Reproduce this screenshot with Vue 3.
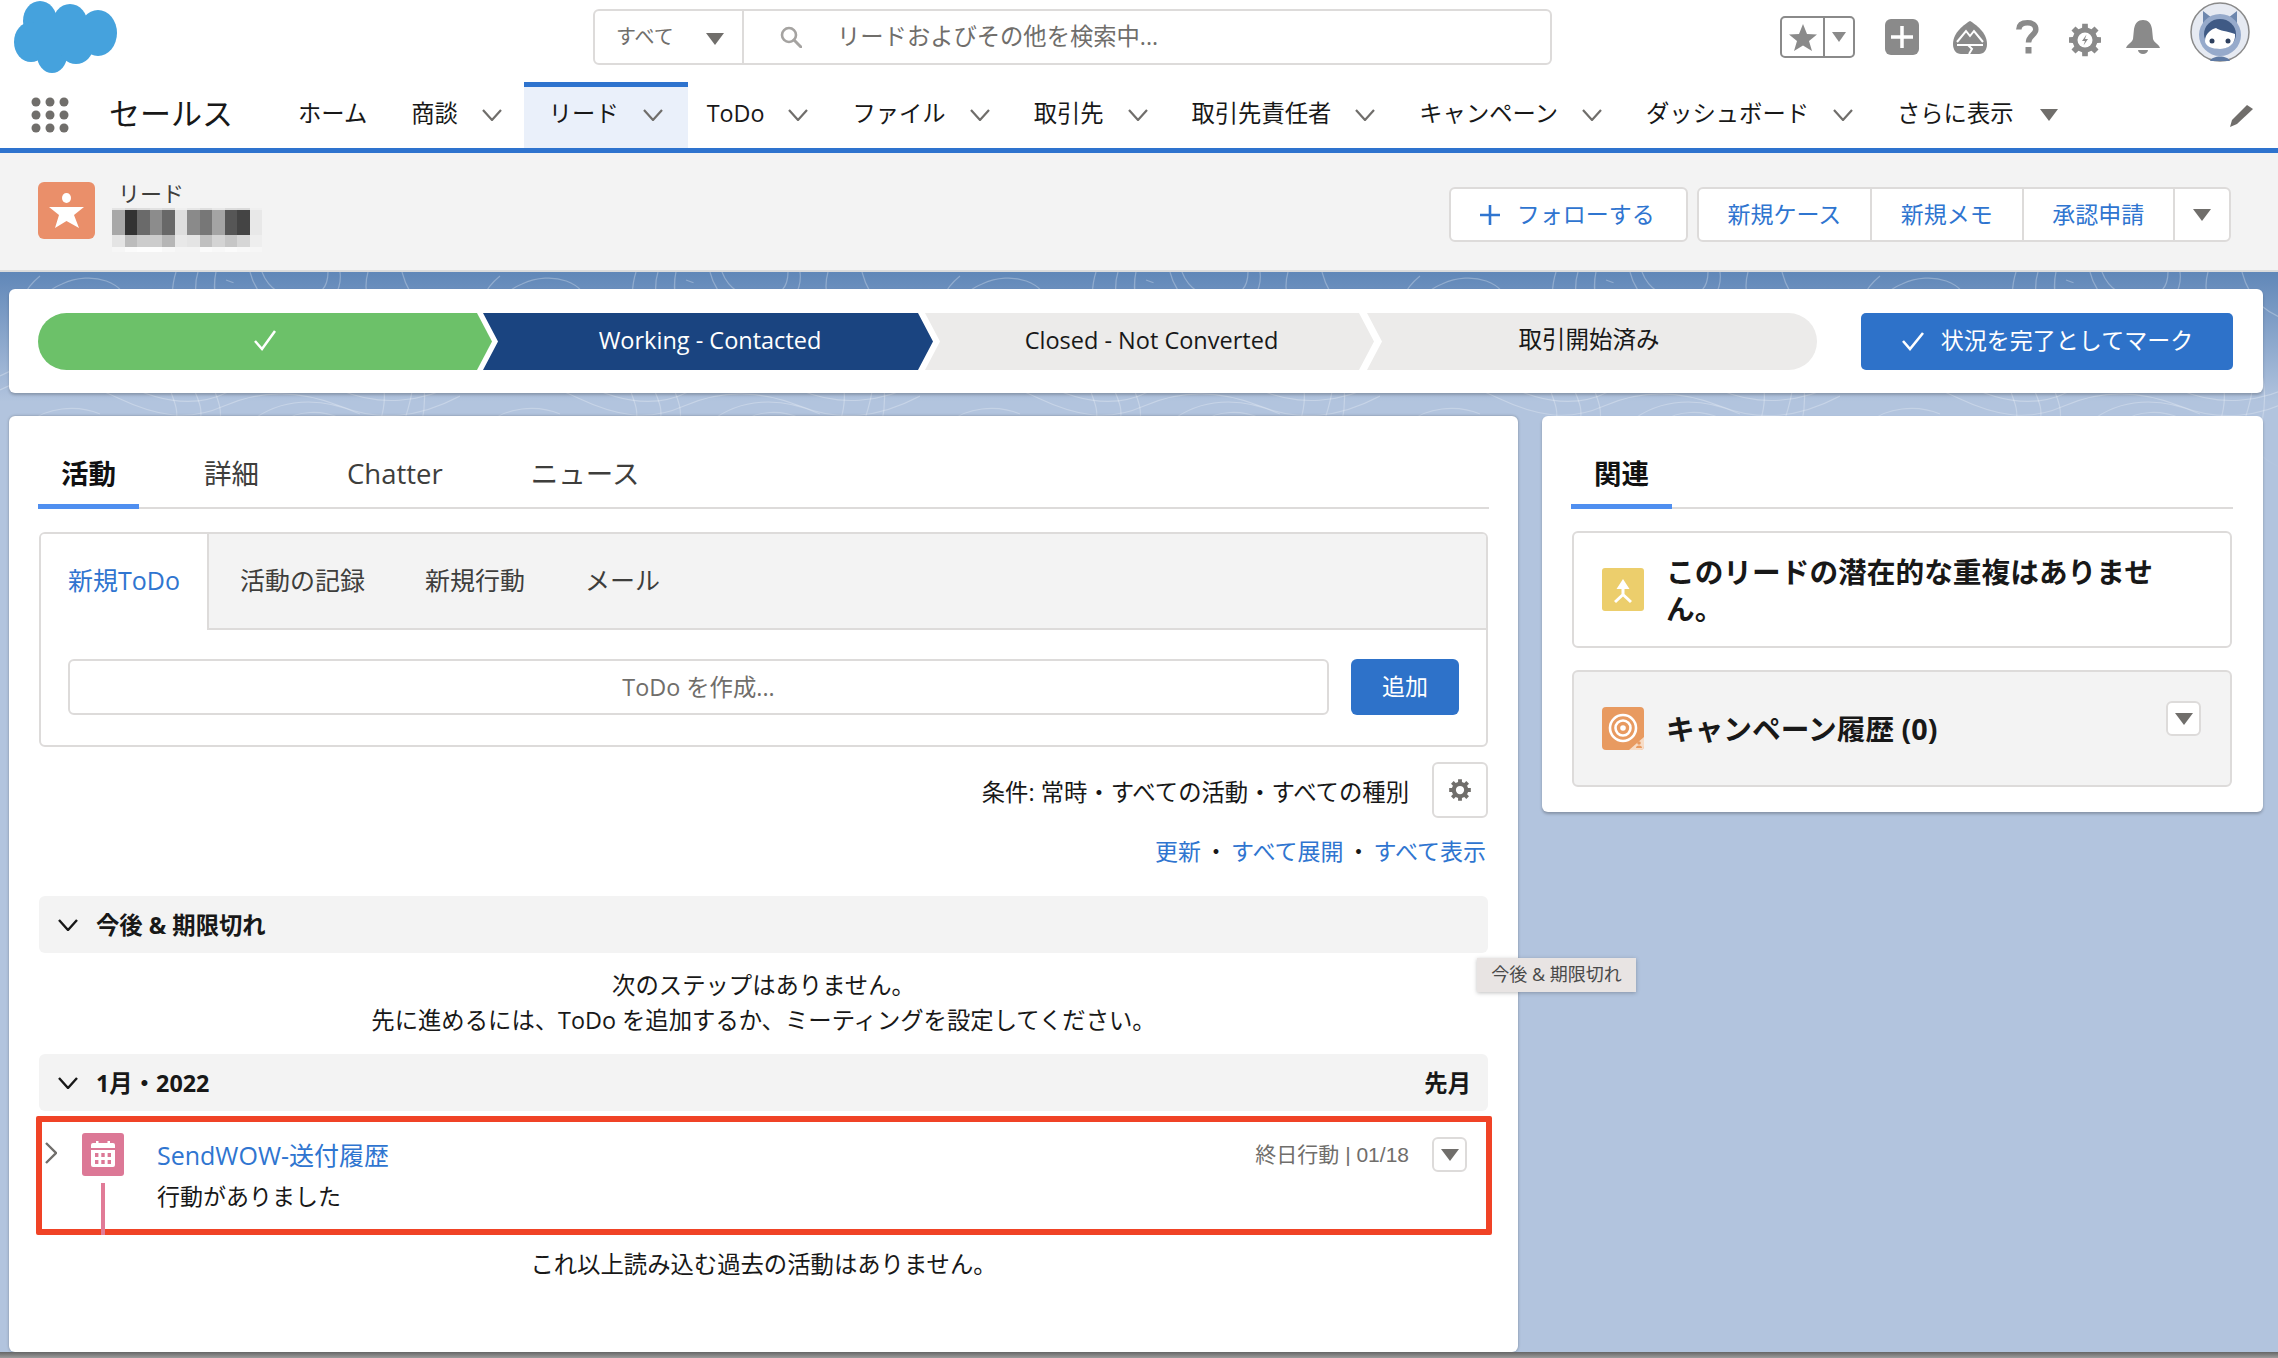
<script setup>
const navItems = [
  { label: 'ホーム' },
  { label: '商談', menu: true },
  { label: 'リード', menu: true, active: true },
  { label: 'ToDo', menu: true },
  { label: 'ファイル', menu: true },
  { label: '取引先', menu: true },
  { label: '取引先責任者', menu: true },
  { label: 'キャンペーン', menu: true },
  { label: 'ダッシュボード', menu: true },
]

const mosaicRows = [
  ['#e4e4e4', '#d8d8d8', '#dcdcdc', '#e2e2e2', '#dadada', '#efefef', '#e6e6e6', '#dedede', '#e8e8e8', '#dcdcdc', '#dadada', '#f0f0f0'],
  ['#a8a8a8', '#333333', '#6a6a6a', '#8c8c8c', '#686868', '#dedede', '#8a8a8a', '#777777', '#a4a4a4', '#565656', '#444444', '#e8e8e8'],
  ['#e4e4e4', '#bcbcbc', '#cccccc', '#cccccc', '#b6b6b6', '#e8e8e8', '#e4e4e4', '#c0c0c0', '#d4d4d4', '#c6c6c6', '#d6d6d6', '#eeeeee'],
  ['#f6f6f6', '#fbfbfb', '#fdfdfd', '#fdfdfd', '#f8f8f8', '#f4f4f4', '#f4f4f4', '#fbfbfb', '#f8f8f8', '#fbfbfb', '#f8f8f8', '#f6f6f6'],
]

const dots = []
for (let y = 0; y < 3; y++) {
  for (let x = 0; x < 3; x++) dots.push({ cx: 5 + x * 14, cy: 5 + y * 13 })
}

function gear(cx, cy, ro, ri, teeth = 8) {
  const pts = []
  const step = (Math.PI * 2) / teeth
  for (let i = 0; i < teeth; i++) {
    const a = i * step - Math.PI / 2
    const w = step * 0.22
    const w2 = step * 0.3
    pts.push([a - w2, ri], [a - w, ro], [a + w, ro], [a + w2, ri])
  }
  return pts
    .map(([a, r]) => `${(cx + Math.cos(a) * r).toFixed(1)},${(cy + Math.sin(a) * r).toFixed(1)}`)
    .join(' ')
}

const gearLarge = gear(16, 17, 16.5, 12.5)
const gearSmall = gear(12, 12, 12, 9)
</script>

<template>
  <div class="page">
    <header class="global">
      <div class="top-row">
        <svg class="logo" viewBox="14 0 104 74" width="104" height="74" aria-label="Salesforce">
          <g fill="#45a2dd">
            <ellipse cx="40" cy="21" rx="17" ry="20" />
            <ellipse cx="70" cy="25" rx="18" ry="21" />
            <ellipse cx="98" cy="33" rx="19" ry="23" />
            <ellipse cx="31" cy="42" rx="17" ry="20" />
            <ellipse cx="52" cy="55" rx="15" ry="18" />
            <ellipse cx="76" cy="47" rx="17" ry="17" />
            <rect x="34" y="20" width="60" height="30" />
          </g>
        </svg>

        <div class="search">
          <div class="search-scope">
            <span>すべて</span>
            <i class="tri"></i>
          </div>
          <div class="search-input">
            <svg viewBox="0 0 22 22" width="22" height="22">
              <circle cx="9" cy="9" r="7" fill="none" stroke="#a5a3a1" stroke-width="2.6" />
              <path d="M14 14l7 7" stroke="#a5a3a1" stroke-width="3" stroke-linecap="round" />
            </svg>
            <span>リードおよびその他を検索中...</span>
          </div>
        </div>

        <div class="tools">
          <div class="fav">
            <span class="fav-star">
              <svg viewBox="0 0 28 27" width="28" height="27">
                <polygon points="14,0 18,10 28,10.500 20,17 23,27 14,21.500 5,27 8,17 0,10.500 10,10" fill="#8a8a8a" />
              </svg>
            </span>
            <span class="fav-menu"><i class="tri tri-small"></i></span>
          </div>
          <svg class="tool-plus" viewBox="0 0 34 36" width="34" height="36">
            <rect width="34" height="36" rx="6" fill="#8a8a8a" />
            <path d="M17 7v22M6 18h22" stroke="#fff" stroke-width="3.500" />
          </svg>
          <svg class="tool-trail" viewBox="0 0 34 33" width="34" height="33">
            <path d="M17 0C22 3 34 11 34 23 34 29 31 33 26 33H8C3 33 0 29 0 23 0 11 12 3 17 0Z" fill="#8a8a8a" />
            <path d="M4 21l9-11 4 5 4-5 9 11M4 24h26" fill="none" stroke="#fff" stroke-width="2" />
            <path d="M15 24l4 4-3 5" fill="none" stroke="#fff" stroke-width="2" />
          </svg>
          <svg class="tool-help" viewBox="0 0 23 34" width="23" height="34">
            <path d="M2.800 9.500C3 4.500 7 2.800 11.500 2.800 16.500 2.800 19.800 5 19.800 9.500 19.800 15 12.500 15.500 12.500 22.500" fill="none" stroke="#8a8a8a" stroke-width="5.500" />
            <rect x="9.500" y="27" width="6" height="6.500" fill="#8a8a8a" />
          </svg>
          <svg class="tool-gear" viewBox="0 0 32 34" width="32" height="34">
            <polygon :points="gearLarge" fill="#8a8a8a" />
            <circle cx="16" cy="17" r="7.500" fill="#fff" />
            <path d="M17.500 11.500l-4.500 6.500h3l-1.500 4.500 4.500-6.500h-3z" fill="#8a8a8a" />
          </svg>
          <svg class="tool-bell" viewBox="0 0 34 34" width="34" height="34">
            <path d="M17 0C22 0 25 3 26 9L27 19C28 23 33 24 34 28H0C1 24 6 23 7 19L8 9C9 3 12 0 17 0Z" fill="#8a8a8a" />
            <path d="M12 30h10a5 4 0 0 1-10 0Z" fill="#8a8a8a" />
          </svg>
          <svg class="tool-avatar" viewBox="0 0 60 60" width="60" height="60">
            <circle cx="30" cy="30" r="29" fill="#e6eaf2" stroke="#8a8a8a" stroke-width="1.500" />
            <path d="M13 9l9 7-9 8zM47 9l-9 7 9 8z" fill="#6d87ae" />
            <ellipse cx="30" cy="33" rx="21" ry="21" fill="#96aacb" />
            <ellipse cx="30" cy="32" rx="16" ry="15" fill="#3f5a85" />
            <path d="M15 39c0-8 7-12 11-13 4 3 11 3 19 6 1 10-7 15-15 15-8 0-15-3-15-8Z" fill="#fff" />
            <circle cx="22" cy="39" r="2.500" fill="#2d3f5e" />
            <circle cx="38" cy="39" r="2.500" fill="#2d3f5e" />
            <path d="M20 59c2-6 18-6 20 0z" fill="#5f7aa3" />
          </svg>
        </div>
      </div>

      <nav class="nav-row">
        <svg class="app-grid" viewBox="0 0 38 36" width="38" height="36">
          <circle v-for="(d, i) in dots" :key="i" :cx="d.cx" :cy="d.cy" r="4.500" fill="#706e6b" />
        </svg>
        <span class="app-name">セールス</span>
        <div class="nav-items">
          <a v-for="item in navItems" :key="item.label" class="nav-item" :class="{ active: item.active }">
            <span>{{ item.label }}</span>
            <svg v-if="item.menu" class="nav-chevron" viewBox="0 0 20 12" width="20" height="12">
              <path d="M1 1l9 10 9-10" fill="none" stroke="#706e6b" stroke-width="2.200" />
            </svg>
          </a>
          <a class="nav-item nav-more">
            <span>さらに表示</span>
            <i class="tri"></i>
          </a>
        </div>
        <svg class="nav-edit" viewBox="0 0 25 23" width="25" height="23">
          <path d="M18 1l6 4L8 20l-7 3 2-7Z" fill="#706e6b" />
        </svg>
      </nav>
    </header>

    <section class="record-head">
      <div class="record-title">
        <svg class="lead-icon" viewBox="0 0 57 57" width="57" height="57">
          <rect width="57" height="57" rx="6" fill="#ea8f6a" />
          <ellipse cx="28.500" cy="16" rx="4.500" ry="5" fill="#fff" />
          <polygon points="11,25 46,25 36,33 41,46 28.500,39 17,46 21,33" fill="#fff" />
        </svg>
        <div>
          <p class="record-type">リード</p>
          <div class="mosaic">
            <div v-for="(row, r) in mosaicRows" :key="r" class="mosaic-row" :class="'mosaic-row-' + r">
              <i v-for="(c, i) in row" :key="i" :style="{ background: c }"></i>
            </div>
          </div>
        </div>
      </div>
      <div class="record-actions">
        <button type="button" class="btn-follow">
          <svg viewBox="0 0 24 24" width="24" height="24">
            <path d="M12 2v20M2 12h20" stroke="#2f75d0" stroke-width="2.600" />
          </svg>
          フォローする
        </button>
        <div class="btn-group">
          <button type="button">新規ケース</button>
          <button type="button">新規メモ</button>
          <button type="button">承認申請</button>
          <button type="button" class="btn-group-menu"><i class="tri"></i></button>
        </div>
      </div>
    </section>

    <main class="content">
      <div class="topo">
        <svg width="2278" height="200">
          <defs>
            <pattern id="contour" width="460" height="150" patternUnits="userSpaceOnUse">
              <g fill="none" stroke="#fff" stroke-width="1.200" stroke-opacity=".28">
                <path d="M62 12c30-14 66-2 66 24s-38 42-68 30-28-42 2-54z" />
                <path d="M74 24c18-8 38-1 38 13s-22 24-38 17-18-24 0-30z" />
                <path d="M40 4C8 30 10 74 44 96s86 10 104-26" />
                <path d="M176 0c-10 30 5 58-5 88s10 40 5 62" />
                <path d="M198 0c-8 24 8 52-4 84s12 40 6 66" />
                <path d="M216 0c-6 24 8 52-2 84s10 40 6 66" />
                <path d="M226 8l14 5M252 18l16 6M280 28l12 4" stroke-dasharray="8 7" />
                <path d="M250 0c6 24 28 44 56 40s36-24 34-40" />
                <path d="M262 0c6 16 22 28 42 26s24-14 24-26" />
                <path d="M368 0c-8 28 8 46 30 70s16 50 6 80" />
                <path d="M402 0c8 30 26 44 58 52" />
                <path d="M0 104c40-22 86-12 120 6s72 28 108 10 74-18 112-2 80 14 120-8" />
                <path d="M0 118c40-22 80-10 118 8s70 24 106 8 76-16 116 0 78 12 120-10" />
                <path d="M30 150c16-14 46-18 70-8" />
                <path d="M250 150c30-24 70-26 110-8" />
                <path d="M282 150c16-12 40-12 58-4" />
                <path d="M380 100c6 16 6 32 0 50M420 96c6 18 6 34 2 54" />
              </g>
            </pattern>
          </defs>
          <rect width="2278" height="200" fill="url(#contour)" />
        </svg>
      </div>

      <section class="path-card">
        <div class="path">
          <div class="step step-done">
            <svg viewBox="0 0 24 24" width="24" height="24">
              <path d="M2 13l7 8L22 3" fill="none" stroke="#fff" stroke-width="2.500" />
            </svg>
          </div>
          <div class="step step-current">Working - Contacted</div>
          <div class="step step-todo">Closed - Not Converted</div>
          <div class="step step-todo step-last">取引開始済み</div>
        </div>
        <button type="button" class="btn-complete">
          <svg viewBox="0 0 24 20" width="24" height="20">
            <path d="M2 10l7 8L22 2" fill="none" stroke="#fff" stroke-width="2.600" />
          </svg>
          状況を完了としてマーク
        </button>
      </section>

      <div class="columns">
        <section class="card card-main">
          <div class="tabs">
            <a class="tab active">活動</a>
            <a class="tab">詳細</a>
            <a class="tab">Chatter</a>
            <a class="tab">ニュース</a>
          </div>

          <div class="composer">
            <div class="composer-tabs">
              <a class="composer-tab active">新規ToDo</a>
              <a class="composer-tab">活動の記録</a>
              <a class="composer-tab">新規行動</a>
              <a class="composer-tab">メール</a>
            </div>
            <div class="composer-body">
              <div class="composer-input">ToDo を作成...</div>
              <button type="button" class="btn-add">追加</button>
            </div>
          </div>

          <div class="filter-row">
            <span class="filter-text">条件: 常時・すべての活動・すべての種別</span>
            <button type="button" class="btn-gear">
              <svg viewBox="0 0 24 24" width="22" height="24">
                <polygon :points="gearSmall" fill="#706e6b" />
                <circle cx="12" cy="12" r="4.500" fill="#fff" />
              </svg>
            </button>
          </div>

          <div class="link-row">
            <a>更新</a><b>・</b><a>すべて展開</a><b>・</b><a>すべて表示</a>
          </div>

          <div class="section-bar section-upcoming">
            <svg viewBox="0 0 20 12" width="20" height="12">
              <path d="M1 1l9 10 9-10" fill="none" stroke="#181818" stroke-width="2.400" />
            </svg>
            <strong>今後 &amp; 期限切れ</strong>
          </div>
          <p class="empty-note">
            次のステップはありません。<br />
            先に進めるには、ToDo を追加するか、ミーティングを設定してください。
          </p>

          <div class="section-bar section-month">
            <svg viewBox="0 0 20 12" width="20" height="12">
              <path d="M1 1l9 10 9-10" fill="none" stroke="#181818" stroke-width="2.400" />
            </svg>
            <strong>1月・2022</strong>
            <strong class="section-right">先月</strong>
          </div>

          <article class="activity">
            <svg class="activity-toggle" viewBox="0 0 12 22" width="12" height="22">
              <path d="M1 1l10 10L1 21" fill="none" stroke="#706e6b" stroke-width="2.400" />
            </svg>
            <div class="timeline">
              <svg viewBox="0 0 42 43" width="42" height="43">
                <rect width="42" height="43" rx="3" fill="#dc7896" />
                <path d="M9 12a2 2 0 0 1 2-2h3V8h2.500v2h9V8H28v2h3a2 2 0 0 1 2 2v3H9z" fill="#fff" />
                <path d="M9 17h24v15a2 2 0 0 1-2 2H11a2 2 0 0 1-2-2z" fill="#fff" />
                <g fill="#dc7896">
                  <rect x="13" y="20" width="3.400" height="4" />
                  <rect x="19.300" y="20" width="3.400" height="4" />
                  <rect x="25.600" y="20" width="3.400" height="4" />
                  <rect x="13" y="27" width="3.400" height="4" />
                  <rect x="19.300" y="27" width="3.400" height="4" />
                  <rect x="25.600" y="27" width="3.400" height="4" />
                </g>
              </svg>
              <i class="timeline-line"></i>
            </div>
            <div class="activity-main">
              <div class="activity-head">
                <a class="activity-title">SendWOW-送付履歴</a>
                <span class="activity-meta">終日行動 | 01/18</span>
                <button type="button" class="btn-menu"><i class="tri"></i></button>
              </div>
              <p class="activity-sub">行動がありました</p>
            </div>
          </article>

          <p class="end-note">これ以上読み込む過去の活動はありません。</p>
        </section>

        <aside class="card card-side">
          <div class="tabs">
            <a class="tab active">関連</a>
          </div>

          <div class="side-box side-first">
            <svg viewBox="0 0 42 43" width="42" height="43">
              <rect width="42" height="43" rx="3" fill="#ecce6c" />
              <path d="M21 11l-6.500 10h5v5l-7.500 7 2 2 7-6.500 7 6.500 2-2-7.500-7v-5h5z" fill="#fff" />
            </svg>
            <h3 class="side-dup">このリードの潜在的な重複はありません。</h3>
          </div>

          <div class="side-box side-campaign">
            <svg viewBox="0 0 42 43" width="42" height="43">
              <rect width="42" height="43" rx="4" fill="#e89a60" />
              <circle cx="21" cy="21" r="13" fill="none" stroke="#fff" stroke-width="2.600" />
              <circle cx="21" cy="21" r="7.500" fill="none" stroke="#fff" stroke-width="2.600" />
              <circle cx="21" cy="21" r="2.800" fill="#fff" />
              <path d="M42 30v9a4 4 0 0 1-4 4H27z" fill="#f7dcc6" />
              <circle cx="37" cy="36" r="1.800" fill="#e89a60" />
              <path d="M34 41a3 2.500 0 0 1 6 0z" fill="#e89a60" />
            </svg>
            <h3>キャンペーン履歴 (0)</h3>
            <button type="button" class="btn-menu btn-menu-side"><i class="tri"></i></button>
          </div>
        </aside>
      </div>

      <div class="tooltip">今後 &amp; 期限切れ</div>
    </main>

    <div class="window-edge"></div>
  </div>
</template>

<style scoped>
.page {
  position: relative;
  display: flex;
  flex-direction: column;
  width: 2278px;
  height: 1358px;
  overflow: hidden;
  color: #181818;
  font-family: "Open Sans", "Noto Sans CJK JP", sans-serif;
  font-size: 23.350px;
  line-height: 1.2;
  background: #b2c4de;
}

p,
h3 {
  margin: 0;
}

button {
  font: inherit;
  cursor: pointer;
}

.tri {
  display: inline-block;
  width: 0;
  height: 0;
  border-style: solid;
  border-width: 12px 9px 0;
  border-color: #706e6b transparent transparent;
}

.tri-small {
  border-width: 10px 7px 0;
  border-top-color: #8a8a8a;
}

/* global header */
.global {
  position: relative;
  z-index: 3;
  flex: none;
  height: 153px;
  background: #fff;
  border-bottom: 5px solid #2e73ce;
  box-sizing: border-box;
}

.top-row {
  display: flex;
  height: 82px;
  padding-left: 14px;
  padding-right: 28px;
}

.logo {
  flex: none;
}

.search {
  display: flex;
  width: 959px;
  height: 56px;
  margin-top: 9px;
  margin-left: 475px;
  border: 2px solid #dddbda;
  border-radius: 6px;
  box-sizing: border-box;
  color: #706e6b;
}

.search-scope {
  display: flex;
  align-items: center;
  width: 149px;
  padding-left: 21px;
  border-right: 2px solid #dddbda;
  font-size: 20px;
  box-sizing: border-box;
}

.search-scope .tri {
  margin-left: 32px;
  margin-top: 4px;
}

.search-input {
  display: flex;
  align-items: center;
  gap: 35px;
  padding-left: 36px;
  font-size: 23.300px;
}

.tools {
  display: flex;
  align-items: center;
  height: 74px;
  margin-left: auto;
}

.fav {
  display: flex;
  width: 75px;
  height: 42px;
  border: 2px solid #8a8a8a;
  border-radius: 5px;
  box-sizing: border-box;
}

.fav-star {
  display: flex;
  align-items: center;
  justify-content: center;
  width: 41px;
  border-right: 2px solid #8a8a8a;
}

.fav-menu {
  display: flex;
  align-items: center;
  justify-content: center;
  flex: 1;
}

.tool-plus {
  margin-left: 30px;
}

.tool-trail {
  margin-left: 34px;
}

.tool-help {
  margin-left: 29px;
}

.tool-gear {
  margin-left: 30px;
  margin-top: 5px;
}

.tool-bell {
  margin-left: 25px;
}

.tool-avatar {
  align-self: flex-start;
  margin-left: 30px;
  margin-top: 2px;
}

.nav-row {
  display: flex;
  align-items: center;
  height: 66px;
  padding-left: 31px;
  font-size: 23.300px;
}

.app-grid {
  flex: none;
}

.app-name {
  margin-left: 40px;
  padding-bottom: 3px;
  font-size: 31px;
}

.nav-items {
  display: flex;
  align-self: stretch;
  margin-left: 43px;
}

.nav-item {
  display: flex;
  align-items: center;
  padding: 0 22px 2px;
  white-space: nowrap;
}

.nav-item .nav-chevron {
  margin-left: 24px;
  margin-top: 2px;
}

.nav-item.active {
  padding: 0 25px 2px;
  background: #eaf0fa;
  box-shadow: inset 0 5px 0 #2e73ce;
}

.nav-item.active + .nav-item {
  margin-left: -3px;
}

.nav-more .tri {
  margin-left: 26px;
  margin-top: 2px;
}

.nav-edit {
  margin-left: auto;
  margin-right: 24px;
}

/* record header */
.record-head {
  position: relative;
  z-index: 2;
  display: flex;
  flex: none;
  justify-content: space-between;
  height: 119px;
  padding-right: 47px;
  padding-left: 38px;
  background: #f3f3f3;
  border-bottom: 2px solid #dcdcdc;
  box-sizing: border-box;
}

.record-title {
  display: flex;
  gap: 17px;
  padding-top: 29px;
}

.record-type {
  margin-top: -2px;
  padding-left: 6px;
  font-size: 22px;
  line-height: 26px;
  color: #3e3e3c;
}

.mosaic {
  margin-top: 2px;
}

.mosaic-row {
  display: flex;
}

.mosaic-row i {
  display: block;
  width: 12.500px;
}

.mosaic-row-0 {
  height: 2px;
}

.mosaic-row-1 {
  height: 25px;
}

.mosaic-row-2 {
  height: 12px;
}

.mosaic-row-3 {
  height: 5px;
}

.record-actions {
  display: flex;
  gap: 9px;
  padding-top: 34px;
  font-size: 23px;
}

.btn-follow,
.btn-group {
  height: 55px;
  background: #fff;
  border: 2px solid #dddbda;
  border-radius: 6px;
  box-sizing: border-box;
  color: #2f75d0;
}

.btn-follow {
  display: flex;
  align-items: center;
  gap: 15px;
  width: 239px;
  padding: 0 27px;
}

.btn-group {
  display: flex;
}

.btn-group button {
  padding: 0 28.750px;
  background: none;
  border: 0;
  border-left: 2px solid #dddbda;
  color: inherit;
}

.btn-group button:first-child {
  border-left: 0;
}

.btn-group .btn-group-menu {
  display: flex;
  align-items: center;
  justify-content: center;
  width: 56px;
  padding: 0;
}

/* content */
.content {
  position: relative;
  flex: 1;
  min-height: 0;
  padding: 17px 15px 0 9px;
  background: linear-gradient(#6087b8 0, #b2c4de 130px);
}

.topo {
  position: absolute;
  top: 0;
  left: 0;
  width: 2278px;
  height: 200px;
  -webkit-mask-image: linear-gradient(#000 65%, transparent);
  mask-image: linear-gradient(#000 65%, transparent);
}

.topo svg {
  display: block;
}

.path-card {
  position: relative;
  display: flex;
  justify-content: space-between;
  height: 104px;
  padding: 24px 30px 0 29px;
  background: #fff;
  border-radius: 6px;
  box-sizing: border-box;
  box-shadow: 0 2px 3px rgba(0, 0, 0, 0.22);
}

.path {
  display: flex;
  width: 1779px;
  height: 57px;
  font-size: 23.500px;
}

.step {
  display: flex;
  align-items: center;
  justify-content: center;
  height: 57px;
  margin-left: -8px;
  padding-left: 4px;
  padding-bottom: 3px;
  box-sizing: border-box;
  clip-path: polygon(0 0, calc(100% - 15px) 0, 100% 50%, calc(100% - 15px) 100%, 0 100%, 15px 50%);
}

.step-done {
  width: 454px;
  margin-left: 0;
  padding-left: 0;
  background: #6cc169;
  border-radius: 29px 0 0 29px;
  clip-path: polygon(0 0, calc(100% - 15px) 0, 100% 50%, calc(100% - 15px) 100%, 0 100%);
}

.step-current {
  width: 450px;
  margin-left: -9px;
  background: #1a4480;
  color: #fff;
}

.step-todo {
  width: 449px;
  background: #ecebea;
}

.step-last {
  width: 450px;
  margin-left: -7px;
  padding-left: 0;
  padding-right: 6px;
  padding-bottom: 4px;
  border-radius: 0 29px 29px 0;
  clip-path: polygon(0 0, 100% 0, 100% 100%, 0 100%, 15px 50%);
}

.btn-complete {
  display: flex;
  align-items: center;
  justify-content: center;
  gap: 16px;
  width: 372px;
  height: 57px;
  padding-bottom: 2px;
  background: #2e72c9;
  border: 0;
  border-radius: 5px;
  font-size: 23px;
  color: #fff;
}

.columns {
  position: relative;
  display: grid;
  grid-template-columns: 1509px 721px;
  gap: 24px;
  align-items: start;
  margin-top: 23px;
}

.card {
  background: #fff;
  border-radius: 6px;
  box-sizing: border-box;
}

.card-main {
  height: 936px;
  padding: 40px 29px 0;
  box-shadow: 0 0 3px rgba(0, 0, 0, 0.3);
}

.card-side {
  height: 396px;
  padding: 40px 30px 0 29px;
  box-shadow: 0 2px 3px rgba(0, 0, 0, 0.25);
}

.tabs {
  display: flex;
  gap: 42px;
  border-bottom: 2px solid #dddbda;
}

.tab {
  margin-bottom: -2px;
  padding: 0 23px 12px;
  border-bottom: 5px solid transparent;
  font-size: 27.500px;
  line-height: 36px;
  color: #3e3e3c;
}

.tab.active {
  border-bottom-color: #4f8ff0;
  color: #111;
  font-weight: 700;
}

.composer {
  margin: 23px 1px 0;
  border: 2px solid #dddbda;
  border-radius: 6px;
}

.composer-tabs {
  display: flex;
  height: 94px;
  background: #f3f3f3;
  border-bottom: 2px solid #dddbda;
  border-radius: 4px 4px 0 0;
  font-size: 25px;
  line-height: 92px;
  color: #3e3e3c;
}

.composer-tab {
  padding: 0 30px;
}

.composer-tab.active {
  width: 168px;
  margin-bottom: -2px;
  padding: 0 0 0 27px;
  background: #fff;
  border-right: 2px solid #dddbda;
  border-radius: 4px 0 0 0;
  box-sizing: border-box;
  color: #2f75d0;
}

.composer-tab.active + .composer-tab {
  padding-left: 31px;
}

.composer-body {
  display: flex;
  gap: 22px;
  padding: 29px 27px 30px 27px;
}

.composer-input {
  flex: 1;
  height: 56px;
  border: 2px solid #dddbda;
  border-radius: 6px;
  box-sizing: border-box;
  line-height: 52px;
  text-align: center;
  color: #706e6b;
}

.btn-add {
  width: 108px;
  height: 56px;
  background: #2e72c9;
  border: 0;
  border-radius: 6px;
  font-size: 23px;
  color: #fff;
}

.filter-row {
  display: flex;
  align-items: center;
  justify-content: flex-end;
  gap: 23px;
  margin-top: 15px;
  padding-right: 1px;
}

.filter-text {
  padding-top: 3px;
}

.btn-gear {
  display: flex;
  align-items: center;
  justify-content: center;
  width: 56px;
  height: 56px;
  padding: 0;
  background: #fff;
  border: 2px solid #dddbda;
  border-radius: 6px;
}

.link-row {
  display: flex;
  justify-content: flex-end;
  margin-top: 18px;
  padding-right: 3px;
  font-size: 23px;
  line-height: 30px;
  color: #2f75d0;
}

.link-row b {
  width: 30px;
  font-weight: 400;
  text-align: center;
  color: #181818;
}

.section-bar {
  display: flex;
  align-items: center;
  height: 57px;
  margin: 0 1px;
  padding: 0 17px 0 19px;
  background: #f3f3f3;
  border-radius: 6px;
}

.section-bar strong {
  margin-left: 18px;
}

.section-upcoming {
  margin-top: 30px;
}

.section-month {
  margin-top: 16px;
}

.section-bar .section-right {
  margin-left: auto;
}

.empty-note {
  margin-top: 15px;
  line-height: 35px;
  text-align: center;
}

.activity {
  display: flex;
  height: 119px;
  margin: 5px -3px 0 -2px;
  padding-left: 3px;
  border: 6px solid #f04326;
  border-radius: 2px;
  box-sizing: border-box;
}

.activity-toggle {
  margin-top: 20px;
}

.timeline {
  display: flex;
  flex-direction: column;
  align-items: center;
  width: 42px;
  margin-left: 25px;
  padding-top: 11px;
}

.timeline svg {
  flex: none;
}

.timeline-line {
  position: relative;
  flex: 1;
  width: 4px;
  margin-top: 7px;
  margin-bottom: -6px;
  background: #e17b97;
}

.activity-main {
  flex: 1;
  margin-left: 33px;
  padding: 11px 19px 0 0;
}

.activity-head {
  display: flex;
  align-items: center;
  height: 43px;
}

.activity-title {
  font-size: 25px;
  color: #2f75d0;
}

.activity-meta {
  margin-left: auto;
  font-family: "Liberation Sans", "Noto Sans CJK JP", sans-serif;
  font-size: 21px;
  color: #706e6b;
}

.btn-menu {
  display: flex;
  align-items: center;
  justify-content: center;
  width: 35px;
  height: 35px;
  margin-left: 23px;
  padding: 0;
  background: #fff;
  border: 2px solid #dddbda;
  border-radius: 6px;
}

.activity-sub {
  font-size: 23px;
  line-height: 40px;
}

.end-note {
  margin-top: 14px;
  line-height: 30px;
  text-align: center;
}

.side-box {
  display: flex;
  align-items: center;
  gap: 22px;
  height: 117px;
  margin: 22px 1px 0;
  padding: 0 29px 0 28px;
  border: 2px solid #dddbda;
  border-radius: 6px;
  box-sizing: border-box;
}

.side-box svg {
  flex: none;
}

.side-box h3 {
  font-size: 28.700px;
  line-height: 37px;
  font-weight: 700;
}

.side-dup {
  width: 500px;
}

.side-campaign {
  background: #f3f3f3;
}

.btn-menu-side {
  align-self: flex-start;
  margin-top: 29px;
  margin-left: auto;
}

.tooltip {
  position: absolute;
  top: 686px;
  left: 1477px;
  display: flex;
  align-items: center;
  justify-content: center;
  width: 159px;
  height: 34px;
  background: #e8e4e3;
  box-shadow: 0 1px 4px rgba(0, 0, 0, 0.25);
  font-size: 18px;
  color: #4a4a4a;
}

.window-edge {
  position: relative;
  z-index: 3;
  flex: none;
  height: 6px;
  background: linear-gradient(#666, #9c9c9c);
}
</style>
